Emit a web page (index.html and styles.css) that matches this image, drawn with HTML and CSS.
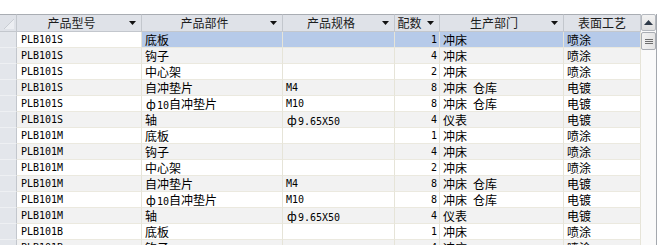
FILE: index.html
```html
<!DOCTYPE html>
<html>
<head>
<meta charset="utf-8">
<link rel="stylesheet" href="styles.css">
</head>
<body>
<div class="sheet">
  <div class="grid">
    <div class="row head">
      <div class="hc corner"><svg width="16" height="16" viewBox="0 0 16 16"><polygon points="4,14 14,4 14,14" fill="#eceef2"/><line x1="4" y1="14" x2="14" y2="4" stroke="#c9cdd3"/></svg></div>
      <div class="hc"><span class="lbl">产品型号</span><span class="arr"><svg width="7" height="5" viewBox="0 0 7 5"><polygon points="0,0 7,0 3.5,4" fill="#111"/></svg></span></div>
      <div class="hc"><span class="lbl">产品部件</span><span class="arr"><svg width="7" height="5" viewBox="0 0 7 5"><polygon points="0,0 7,0 3.5,4" fill="#111"/></svg></span></div>
      <div class="hc"><span class="lbl">产品规格</span><span class="arr"><svg width="7" height="5" viewBox="0 0 7 5"><polygon points="0,0 7,0 3.5,4" fill="#111"/></svg></span></div>
      <div class="hc"><span class="lbl">配数</span><span class="arr"><svg width="7" height="5" viewBox="0 0 7 5"><polygon points="0,0 7,0 3.5,4" fill="#111"/></svg></span></div>
      <div class="hc"><span class="lbl">生产部门</span><span class="arr"><svg width="7" height="5" viewBox="0 0 7 5"><polygon points="0,0 7,0 3.5,4" fill="#111"/></svg></span></div>
      <div class="hc"><span class="lbl">表面工艺</span></div>
    </div>

    <div class="row sel">
      <div class="rs"></div><div class="c lat focus">PLB101S</div><div class="c">底板</div><div class="c"></div><div class="c lat num">1</div><div class="c">冲床</div><div class="c">喷涂</div>
    </div>
    <div class="row alt">
      <div class="rs"></div><div class="c lat">PLB101S</div><div class="c">钩子</div><div class="c"></div><div class="c lat num">4</div><div class="c">冲床</div><div class="c">喷涂</div>
    </div>
    <div class="row">
      <div class="rs"></div><div class="c lat">PLB101S</div><div class="c">中心架</div><div class="c"></div><div class="c lat num">2</div><div class="c">冲床</div><div class="c">喷涂</div>
    </div>
    <div class="row alt">
      <div class="rs"></div><div class="c lat">PLB101S</div><div class="c">自冲垫片</div><div class="c lat">M4</div><div class="c lat num">8</div><div class="c">冲床<span class="lat"> </span>仓库</div><div class="c">电镀</div>
    </div>
    <div class="row">
      <div class="rs"></div><div class="c lat">PLB101S</div><div class="c"><span class="phi">ф</span><span class="lat">10</span>自冲垫片</div><div class="c lat">M10</div><div class="c lat num">8</div><div class="c">冲床<span class="lat"> </span>仓库</div><div class="c">电镀</div>
    </div>
    <div class="row alt">
      <div class="rs"></div><div class="c lat">PLB101S</div><div class="c">轴</div><div class="c"><span class="phi">ф</span><span class="lat">9.65X50</span></div><div class="c lat num">4</div><div class="c">仪表</div><div class="c">电镀</div>
    </div>
    <div class="row">
      <div class="rs"></div><div class="c lat">PLB101M</div><div class="c">底板</div><div class="c"></div><div class="c lat num">1</div><div class="c">冲床</div><div class="c">喷涂</div>
    </div>
    <div class="row alt">
      <div class="rs"></div><div class="c lat">PLB101M</div><div class="c">钩子</div><div class="c"></div><div class="c lat num">4</div><div class="c">冲床</div><div class="c">喷涂</div>
    </div>
    <div class="row">
      <div class="rs"></div><div class="c lat">PLB101M</div><div class="c">中心架</div><div class="c"></div><div class="c lat num">2</div><div class="c">冲床</div><div class="c">喷涂</div>
    </div>
    <div class="row alt">
      <div class="rs"></div><div class="c lat">PLB101M</div><div class="c">自冲垫片</div><div class="c lat">M4</div><div class="c lat num">8</div><div class="c">冲床<span class="lat"> </span>仓库</div><div class="c">电镀</div>
    </div>
    <div class="row">
      <div class="rs"></div><div class="c lat">PLB101M</div><div class="c"><span class="phi">ф</span><span class="lat">10</span>自冲垫片</div><div class="c lat">M10</div><div class="c lat num">8</div><div class="c">冲床<span class="lat"> </span>仓库</div><div class="c">电镀</div>
    </div>
    <div class="row alt">
      <div class="rs"></div><div class="c lat">PLB101M</div><div class="c">轴</div><div class="c"><span class="phi">ф</span><span class="lat">9.65X50</span></div><div class="c lat num">4</div><div class="c">仪表</div><div class="c">电镀</div>
    </div>
    <div class="row">
      <div class="rs"></div><div class="c lat">PLB101B</div><div class="c">底板</div><div class="c"></div><div class="c lat num">1</div><div class="c">冲床</div><div class="c">喷涂</div>
    </div>
    <div class="row alt">
      <div class="rs"></div><div class="c lat">PLB101B</div><div class="c">钩子</div><div class="c"></div><div class="c lat num">4</div><div class="c">冲床</div><div class="c">喷涂</div>
    </div>
  </div>
  <div class="scroll">
    <div class="sb-btn"><svg width="9" height="5" viewBox="0 0 9 5"><polygon points="0,5 9,5 4.5,0" fill="#2f3a48"/></svg></div>
    <div class="sb-thumb"><span></span><span></span><span></span></div>
  </div>
</div>
</body>
</html>
```

FILE: styles.css
```css
html, body {
  margin: 0;
  padding: 0;
  background: #ffffff;
}
body {
  width: 669px;
  height: 245px;
  overflow: hidden;
  font-family: "Noto Sans CJK SC", sans-serif;
  font-size: 12px;
  color: #000;
}
.sheet {
  margin-top: 14px;
  display: flex;
  align-items: stretch;
  height: 231px;
}
.grid {
  width: 641px;
  display: flex;
  flex-direction: column;
}
.row {
  display: grid;
  grid-template-columns: 17px 125px 141px 112px 45px 124px 77px;
  height: 16px;
  flex: none;
}
.row.head {
  height: 18px;
}
.hc {
  box-sizing: border-box;
  height: 18px;
  background: #dfe2e8;
  border-top: 1px solid #a9adb3;
  border-bottom: 1px solid #c3c7cd;
  border-right: 1px solid #c3c7cd;
  display: flex;
  align-items: center;
  color: #1c1c1c;
  line-height: 16px;
}
.hc.corner {
  background: #dfe2e8;
  align-items: flex-start;
}
.hc.corner svg {
  display: block;
}
.lbl {
  flex: 1;
  text-align: center;
  white-space: nowrap;
}
.arr {
  width: 15px;
  flex: none;
  display: flex;
  padding-left: 3px;
  box-sizing: border-box;
  align-items: center;
  padding-top: 1px;
}
.arr svg {
  display: block;
}
.rs {
  box-sizing: border-box;
  background: #e3e6eb;
  border-right: 1px solid #c3c7cd;
  border-bottom: 1px solid #eef0f3;
}
.c {
  box-sizing: border-box;
  height: 16px;
  line-height: 15px;
  border-right: 1px solid #e6e4d8;
  border-bottom: 1px solid #ebe9df;
  padding-left: 3px;
  white-space: pre;
  overflow: hidden;
  background: #ffffff;
}
.row .c:nth-child(2) {
  padding-left: 4px;
}
.row.alt .c {
  background: #f2f2f2;
}
.row.sel .c {
  background: #b6cae9;
}
.row.sel .c.focus {
  background: #ffffff;
}
.lat {
  font-family: "DejaVu Sans Mono", monospace;
  font-size: 10px;
}
.c.lat {
  line-height: 15px;
}
.phi {
  display: inline-block;
  width: 12px;
  text-align: center;
}
.num {
  text-align: right;
  padding-right: 2px;
  padding-left: 0;
}
.scroll {
  width: 16px;
  box-sizing: border-box;
  border-right: 1px solid #a4a8ae;
  background: #fafafa;
  display: flex;
  flex-direction: column;
}
.sb-btn {
  box-sizing: border-box;
  height: 17px;
  border: 1px solid #b4b8be;
  border-radius: 2px;
  background: linear-gradient(#f3f3f3, #dedede);
  display: flex;
  align-items: center;
  justify-content: center;
}
.sb-btn svg {
  display: block;
}
.sb-thumb {
  box-sizing: border-box;
  height: 18px;
  margin-top: 1px;
  border: 1px solid #a9adb3;
  border-radius: 2px;
  background: linear-gradient(90deg, #f2f2f2, #e4e4e4);
  display: flex;
  flex-direction: column;
  align-items: center;
  justify-content: center;
  gap: 1px;
}
.sb-thumb span {
  display: block;
  width: 8px;
  height: 1px;
  background: #6e6e6e;
}
```
